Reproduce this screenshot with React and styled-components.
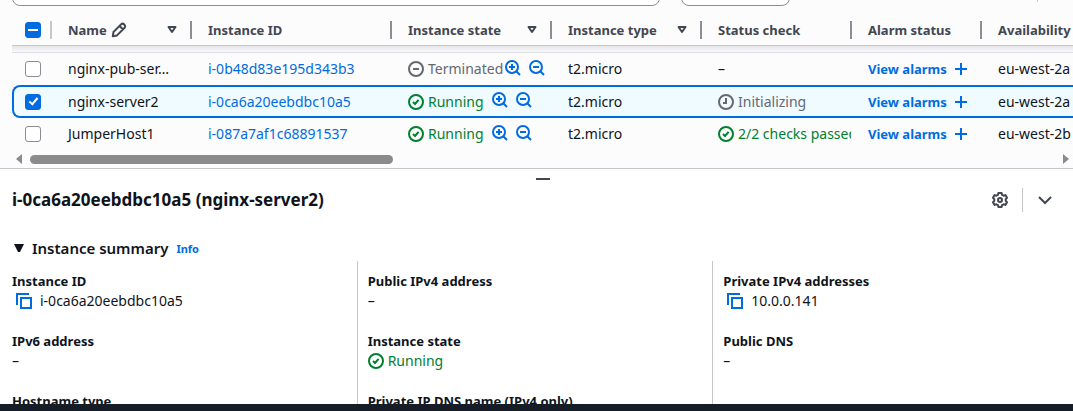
import React from "react";
import styled, { createGlobalStyle, css } from "styled-components";

const blue = "#006ce0";
const green = "#00802f";
const grey = "#656871";
const ink = "#0f141a";
const headInk = "#424650";

const GlobalStyle = createGlobalStyle`
  *, *::before, *::after { box-sizing: border-box; }
  body {
    margin: 0;
    background: #fcfcfd;
    color: ${ink};
    font: 14px/20px "Noto Sans", "Open Sans", sans-serif;
  }
  button, input, select { font: inherit; }
`;

const Page = styled.div`
  display: flex;
  flex-direction: column;
  height: 100vh;
  overflow: hidden;
`;

const Toolbar = styled.div`
  display: flex;
  align-items: flex-end;
  gap: 21px;
  height: 6px;
  padding: 0 35px 0 12px;
  overflow: hidden;
  flex: none;
`;

const field = css`
  height: 32px;
  border: 1px solid #8c8c94;
  border-radius: 8px;
  background: #fff;
`;

const Search = styled.input`
  ${field}
  flex: 1;
  min-width: 0;
`;

const Filter = styled.select`
  ${field}
  width: 109px;
  appearance: none;
`;

const Pager = styled.div`
  width: 227px;
  height: 32px;
  margin-bottom: 4px;
  border-right: 1px solid #c6c6cd;
`;

const TableArea = styled.div`
  padding-left: 12px;
  overflow: hidden;
  flex: none;
`;

const Table = styled.table`
  width: 1170px;
  table-layout: fixed;
  border-collapse: separate;
  border-spacing: 0;
`;

const Th = styled.th`
  width: ${(p) => p.$width}px;
  height: 40px;
  padding: 8px 0 0 ${(p) => (p.$tight ? 13 : 16)}px;
  border-bottom: 1px solid #c6c6cd;
  text-align: left;
  font-size: 13px;
  font-weight: 700;
  color: ${headInk};
  white-space: nowrap;
`;

const HeadInner = styled.div`
  display: flex;
  align-items: center;
  gap: 4px;
  height: 18px;
  padding-right: 10px;
  border-right: 2px solid ${(p) => (p.$light ? "#c6c6cd" : "#8c8c94")};
`;

const Grow = styled.span`
  flex: 1;
`;

const HiddenRow = styled.td`
  height: 7px;
  padding: 0;
  border-bottom: 1px solid #dedee3;
  background: linear-gradient(#e6e6e9, #f8f8f9);
`;

const Td = styled.td`
  height: ${(p) => (p.$selected ? 33 : 32)}px;
  padding: 0 1px 0 ${(p) => (p.$tight ? 13 : 16)}px;
  vertical-align: middle;
  overflow: hidden;
  white-space: nowrap;
  ${(p) =>
    p.$selected &&
    css`
      border: solid ${blue};
      border-width: 2px 0;
      background: #f0fbff;
      &:first-child {
        padding-left: 11px;
        border-left-width: 2px;
        border-radius: 8px 0 0 8px;
      }
    `}
`;

const Check = styled.input.attrs({ type: "checkbox" })`
  appearance: none;
  display: grid;
  place-items: center;
  flex: none;
  width: 16px;
  height: 16px;
  margin: 0;
  border: 1px solid #8c8c94;
  border-radius: 3px;
  background: #fff;
  &:checked,
  &:indeterminate {
    border-color: ${blue};
    background: ${blue};
  }
  &:checked::before {
    content: "";
    width: 5px;
    height: 9px;
    margin-bottom: 2px;
    border: solid #fff;
    border-width: 0 2px 2px 0;
    transform: rotate(40deg);
  }
  &:indeterminate::before {
    content: "";
    width: 10px;
    height: 2px;
    background: #fff;
  }
`;

const Link = styled.a`
  color: ${blue};
  text-decoration: none;
`;

const AlarmLink = styled(Link)`
  display: flex;
  align-items: center;
  gap: 6px;
  font-size: 13px;
  font-weight: 700;
`;

const StateCell = styled.div`
  display: flex;
  align-items: center;
  gap: 2px;
`;

const Status = styled.span`
  display: flex;
  align-items: center;
  gap: 4px;
  min-width: ${(p) => (p.$wide ? 82 : 0)}px;
  overflow: hidden;
  color: ${(p) => p.$color};
`;

const Tools = styled.span`
  display: flex;
  gap: 8px;
  padding-bottom: 3px;
`;

const IconButton = styled.button`
  display: inline-flex;
  padding: 0;
  border: 0;
  background: none;
  color: ${(p) => p.$color || blue};
`;

const Svg = styled.svg.attrs({ viewBox: "0 0 16 16", "aria-hidden": true })`
  width: 16px;
  height: 16px;
  flex: none;
  fill: none;
  stroke: currentColor;
  stroke-width: 2;
`;

const ScrollBar = styled.div`
  display: flex;
  align-items: center;
  height: 18px;
  padding: 0 4px 0 16px;
  flex: none;
`;

const Arrow = styled.button`
  width: 6px;
  height: 10px;
  padding: 0;
  border: 0;
  background: #8b8b8b;
  clip-path: ${(p) =>
    p.$left ? "polygon(100% 0, 100% 100%, 0 50%)" : "polygon(0 0, 0 100%, 100% 50%)"};
`;

const Track = styled.div`
  flex: 1;
  padding: 0 8px;
`;

const Thumb = styled.div`
  width: 35.4%;
  height: 9px;
  border-radius: 5px;
  background: #8b8b8b;
`;

const Panel = styled.section`
  flex: 1;
  min-height: 0;
  overflow: hidden;
  border-top: 1px solid #c6c6cd;
  background: #fff;
`;

const Handle = styled.button`
  display: block;
  width: 14px;
  height: 2px;
  margin: 9px auto 8px;
  padding: 0;
  border: 0;
  background: ${headInk};
  position: relative;
  left: 6px;
`;

const PanelHead = styled.header`
  display: flex;
  align-items: center;
  height: 24px;
  padding: 0 20px 0 12px;
`;

const Title = styled.h2`
  flex: 1;
  margin: 0;
  font-size: 17px;
  line-height: 24px;
  font-weight: 700;
`;

const Divider = styled.span`
  width: 1px;
  height: 24px;
  margin: 0 14px;
  background: #c6c6cd;
`;

const SummaryHead = styled.div`
  display: flex;
  align-items: center;
  gap: 8px;
  padding: 25px 12px 2px;
`;

const SummaryTitle = styled.h3`
  margin: 0;
  font-size: 15px;
  line-height: 22px;
  font-weight: 600;
`;

const Toggle = styled.button`
  display: flex;
  align-items: center;
  gap: 4px;
  padding: 0;
  border: 0;
  background: none;
  color: inherit;
  font: inherit;
`;

const Info = styled(Link)`
  padding-top: 2px;
  font-size: 11px;
  font-weight: 700;
`;

const Columns = styled.div`
  display: grid;
  grid-template-columns: repeat(3, 1fr);
  column-gap: 18px;
  padding: 0 12px;
`;

const Column = styled.dl`
  margin: 0;
  padding-top: 10px;
  & + & {
    margin-left: -11px;
    padding-left: 10px;
    border-left: 1px solid #c6c6cd;
  }
`;

const Label = styled.dt`
  font-size: 13px;
  font-weight: 700;
`;

const Value = styled.dd`
  display: flex;
  align-items: center;
  gap: 8px;
  height: 20px;
  margin: 0 0 20px;
  padding-left: ${(p) => (p.$copy ? 4 : 0)}px;
`;

const Footer = styled.footer`
  flex: none;
  height: 7px;
  background: #161d26;
`;

const Triangle = () => (
  <Svg>
    <path d="M4.500 5h7L8 10z" strokeLinejoin="round" />
  </Svg>
);
const Pencil = () => (
  <Svg>
    <path
      d="M1.800 14.200l.7-4.200L10 2.400q1.600-1.500 3.200 0t.4 3.300L6 13.400zM8.800 4.200l3 3"
      strokeLinejoin="round"
    />
  </Svg>
);
const Success = () => (
  <Svg>
    <circle cx="8" cy="8" r="7" />
    <path d="M5 8l2 2 3.6-4.2" />
  </Svg>
);
const Stopped = () => (
  <Svg>
    <circle cx="8" cy="8" r="7" />
    <path d="M5 8h6" />
  </Svg>
);
const Clock = () => (
  <Svg>
    <circle cx="8" cy="8" r="7" />
    <path d="M8 4v5H5" />
  </Svg>
);
const Zoom = ({ plus }) => (
  <Svg>
    <circle cx="7" cy="7" r="6" />
    <path d={plus ? "M11 11l4 4M4 7h6M7 4v6" : "M11 11l4 4M4 7h6"} />
  </Svg>
);
const Plus = () => (
  <Svg>
    <path d="M8 2v12M2 8h12" />
  </Svg>
);
const Copy = () => (
  <Svg>
    <path d="M13 1H1v11M5 5h10v10H5z" />
  </Svg>
);
const Gear = () => (
  <Svg>
    <path
      d="M6.4 1h3.2l.5 1.9 1.5.8 1.8-.6L15 5.800l-1.300 1.400v1.600L15 10.200l-1.600 2.700-1.800-.6-1.500.8L9.600 15H6.400l-.5-1.900-1.500-.8-1.800.6L1 10.200l1.300-1.400V7.200L1 5.800l1.600-2.700 1.800.6 1.500-.8z"
      strokeLinejoin="round"
    />
    <circle cx="8" cy="8" r="2" />
  </Svg>
);
const Chevron = () => (
  <Svg>
    <path d="M2 5l6 6 6-6" />
  </Svg>
);
const Caret = () => (
  <Svg>
    <path d="M2 4h10l-4 8h-2z" fill="currentColor" stroke="none" />
  </Svg>
);

const headers = [
  { text: "Name", width: 140, edit: true, sort: true },
  { text: "Instance ID", width: 200 },
  { text: "Instance state", width: 160, sort: true },
  { text: "Instance type", width: 150, sort: true },
  { text: "Status check", width: 150 },
  { text: "Alarm status", width: 130 },
  { text: "Availability Zone", width: 200 },
];

const states = {
  Terminated: [Stopped, grey],
  Running: [Success, green],
  Initializing: [Clock, grey],
  "2/2 checks passed": [Success, green],
};

const rows = [
  { name: "nginx-pub-ser…", id: "i-0b48d83e195d343b3", state: "Terminated", check: "–", zone: "eu-west-2a" },
  { name: "nginx-server2", id: "i-0ca6a20eebdbc10a5", state: "Running", check: "Initializing", zone: "eu-west-2a", selected: true },
  { name: "JumperHost1", id: "i-087a7af1c68891537", state: "Running", check: "2/2 checks passed", zone: "eu-west-2b" },
];

const details = [
  [
    { label: "Instance ID", value: "i-0ca6a20eebdbc10a5", copy: true },
    { label: "IPv6 address", value: "–" },
    { label: "Hostname type", value: "" },
  ],
  [
    { label: "Public IPv4 address", value: "–" },
    { label: "Instance state", value: "Running" },
    { label: "Private IP DNS name (IPv4 only)", value: "" },
  ],
  [
    { label: "Private IPv4 addresses", value: "10.0.0.141", copy: true },
    { label: "Public DNS", value: "–" },
  ],
];

function StatusText({ text, wide }) {
  if (!states[text]) return text;
  const [Icon, color] = states[text];
  return (
    <Status $color={color} $wide={wide}>
      <Icon />
      {text}
    </Status>
  );
}

function Row({ row }) {
  const cell = { $selected: row.selected };
  return (
    <tr>
      <Td {...cell} $tight>
        <Check aria-label={`Select ${row.name}`} defaultChecked={row.selected} />
      </Td>
      <Td {...cell}>{row.name}</Td>
      <Td {...cell}>
        <Link href="#instance">{row.id}</Link>
      </Td>
      <Td {...cell}>
        <StateCell>
          <StatusText text={row.state} wide />
          <Tools>
            <IconButton aria-label="Include state in filter">
              <Zoom plus />
            </IconButton>
            <IconButton aria-label="Exclude state from filter">
              <Zoom />
            </IconButton>
          </Tools>
        </StateCell>
      </Td>
      <Td {...cell}>t2.micro</Td>
      <Td {...cell}>
        <StatusText text={row.check} />
      </Td>
      <Td {...cell}>
        <AlarmLink href="#alarms">
          View alarms <Plus />
        </AlarmLink>
      </Td>
      <Td {...cell}>{row.zone}</Td>
    </tr>
  );
}

export default function App() {
  return (
    <>
      <GlobalStyle />
      <Page>
        <Toolbar>
          <Search aria-label="Find instance" />
          <Filter aria-label="Instance state filter" />
          <Pager />
        </Toolbar>
        <TableArea>
          <Table>
            <thead>
              <tr>
                <Th $width={40} $tight>
                  <HeadInner $light>
                    <Check
                      aria-label="Select all"
                      ref={(el) => {
                        if (el) el.indeterminate = true;
                      }}
                    />
                  </HeadInner>
                </Th>
                {headers.map((h) => (
                  <Th key={h.text} $width={h.width}>
                    <HeadInner>
                      {h.text}
                      {h.edit && <Pencil />}
                      <Grow />
                      {h.sort && (
                        <IconButton $color={headInk} aria-label={`Sort by ${h.text}`}>
                          <Triangle />
                        </IconButton>
                      )}
                    </HeadInner>
                  </Th>
                ))}
              </tr>
            </thead>
            <tbody>
              <tr>
                <HiddenRow colSpan={8} />
              </tr>
              {rows.map((row) => (
                <Row key={row.id} row={row} />
              ))}
            </tbody>
          </Table>
        </TableArea>
        <ScrollBar>
          <Arrow $left aria-label="Scroll left" />
          <Track>
            <Thumb />
          </Track>
          <Arrow aria-label="Scroll right" />
        </ScrollBar>
        <Panel>
          <Handle aria-label="Resize panel" />
          <PanelHead>
            <Title>i-0ca6a20eebdbc10a5 (nginx-server2)</Title>
            <IconButton $color={headInk} aria-label="Panel preferences">
              <Gear />
            </IconButton>
            <Divider />
            <IconButton $color={headInk} aria-label="Close panel">
              <Chevron />
            </IconButton>
          </PanelHead>
          <SummaryHead>
            <SummaryTitle>
              <Toggle aria-expanded="true">
                <Caret />
                Instance summary
              </Toggle>
            </SummaryTitle>
            <Info href="#info">Info</Info>
          </SummaryHead>
          <Columns>
            {details.map((items) => (
              <Column key={items[0].label}>
                {items.map((d) => (
                  <React.Fragment key={d.label}>
                    <Label>{d.label}</Label>
                    <Value $copy={d.copy}>
                      {d.copy && (
                        <IconButton aria-label={`Copy ${d.label}`}>
                          <Copy />
                        </IconButton>
                      )}
                      <StatusText text={d.value} />
                    </Value>
                  </React.Fragment>
                ))}
              </Column>
            ))}
          </Columns>
        </Panel>
        <Footer />
      </Page>
    </>
  );
}
